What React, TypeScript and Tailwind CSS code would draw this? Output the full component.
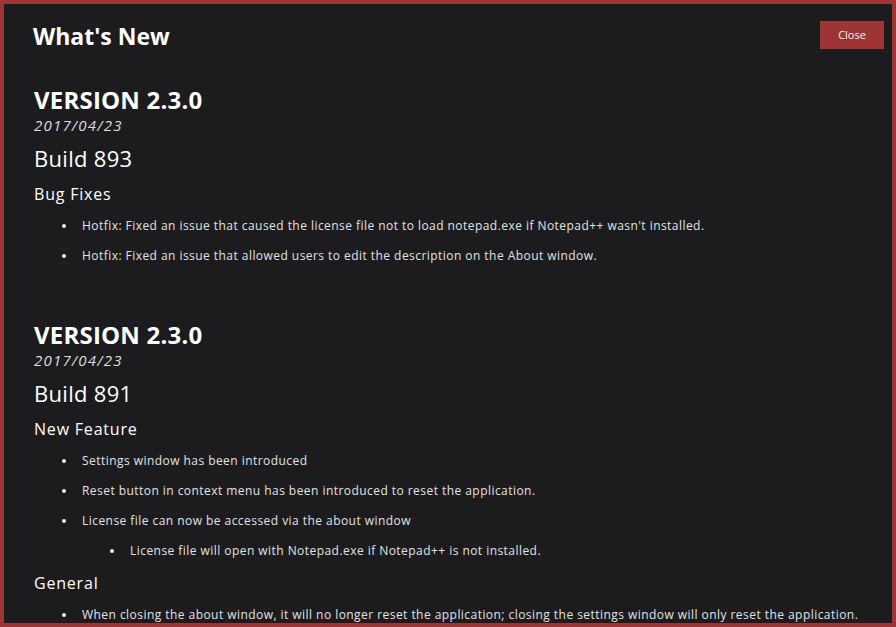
import React from "react";

type Item = { text: string; sub?: string[] };
type Group = { title: string; items: Item[] };
type Release = { version: string; date: string; build: string; groups: Group[] };

const releases: Release[] = [
  {
    version: "VERSION 2.3.0",
    date: "2017/04/23",
    build: "Build 893",
    groups: [
      {
        title: "Bug Fixes",
        items: [
          { text: "Hotfix: Fixed an issue that caused the license file not to load notepad.exe if Notepad++ wasn't installed." },
          { text: "Hotfix: Fixed an issue that allowed users to edit the description on the About window." },
        ],
      },
    ],
  },
  {
    version: "VERSION 2.3.0",
    date: "2017/04/23",
    build: "Build 891",
    groups: [
      {
        title: "New Feature",
        items: [
          { text: "Settings window has been introduced" },
          { text: "Reset button in context menu has been introduced to reset the application." },
          {
            text: "License file can now be accessed via the about window",
            sub: ["License file will open with Notepad.exe if Notepad++ is not installed."],
          },
        ],
      },
      {
        title: "General",
        items: [
          { text: "When closing the about window, it will no longer reset the application; closing the settings window will only reset the application." },
        ],
      },
    ],
  },
];

const Bullet = ({ text }: { text: string }) => (
  <div className="flex items-center h-[20px] mb-[10px]">
    <span className="w-[4px] h-[4px] rounded-full bg-[#f2f2f2] ml-[28px] mr-[16px] shrink-0" />
    <span className="whitespace-nowrap">{text}</span>
  </div>
);

export default function App() {
  return (
    <div
      className="h-[627px] w-[896px] border-4 border-[#9c3535] bg-[#1c1c1e] overflow-hidden text-white"
      style={{ fontFamily: "'Open Sans', 'DejaVu Sans', sans-serif" }}
    >
      {/* Header */}
      <div className="flex items-start justify-between pl-[29px] pr-2 pt-4">
        <h1 className="text-[23px] leading-[32px] font-bold">What's New</h1>
        <button className="mt-[1px] w-[64px] h-[28px] bg-[#9e3535] text-[11px] text-[#f0f0f0]">
          Close
        </button>
      </div>

      <div className="pl-[30px] pt-[33px]">
        {releases.map((r, i) => (
          <section key={i} className={i > 0 ? "mt-[54px]" : ""}>
            <h2 className="text-[24px] leading-[30px] font-bold tracking-[0.2px]">{r.version}</h2>
            <div className="text-[15px] leading-[20px] italic text-[#dcdcdc] tracking-[1.2px]">{r.date}</div>
            <h3 className="mt-[9px] text-[22px] leading-[28px] tracking-[0.3px]">{r.build}</h3>
            {r.groups.map((g, gi) => (
              <div key={gi}>
                <h4 className="mt-[11px] text-[16px] leading-[22px] tracking-[0.8px]">{g.title}</h4>
                <div className="mt-[11px] text-[12px] text-[#e2e2e2] tracking-[0.45px]">
                  {g.items.map((it, ii) => (
                    <div key={ii}>
                      <Bullet text={it.text} />
                      {it.sub && (
                        <div className="pl-[48px]">
                          {it.sub.map((s, si) => (
                            <Bullet key={si} text={s} />
                          ))}
                        </div>
                      )}
                    </div>
                  ))}
                </div>
              </div>
            ))}
          </section>
        ))}
      </div>
    </div>
  );
}
